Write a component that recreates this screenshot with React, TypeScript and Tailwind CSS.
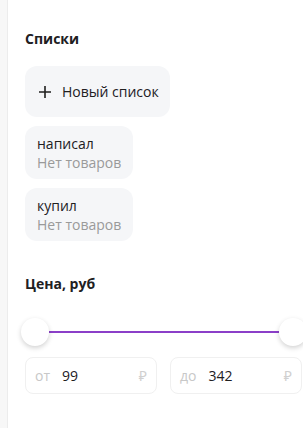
import React from "react";

const lists = [
  { name: "написал", count: "Нет товаров" },
  { name: "купил", count: "Нет товаров" },
];

const App: React.FC = () => {
  return (
    <div
      className="flex h-[428px] w-[303px] overflow-hidden bg-white text-[#21201f]"
      style={{ fontFamily: '"Open Sans", "Noto Sans", sans-serif' }}
    >
      <div className="w-2 shrink-0 border-r border-[#ececec] bg-[#f7f7f7]" />

      <div className="flex flex-1 flex-col pl-[17px] pt-[29px]">
        <h2 className="text-[14px] font-bold leading-5">Списки</h2>

        <div className="mt-[17px] flex flex-col items-start gap-[9px]">
          <button className="flex h-[51px] items-center gap-[10px] rounded-xl bg-[#f5f6f8] pl-[13px] pr-[11px] text-[14px]">
            <svg width="14" height="14" viewBox="0 0 14 14" fill="none">
              <path d="M7 1v12M1 7h12" stroke="#21201f" strokeWidth="1.6" />
            </svg>
            <span>Новый список</span>
          </button>

          <div className="flex flex-col gap-[9px]">
            {lists.map((l) => (
              <div key={l.name} className="flex h-[53px] flex-col justify-center rounded-xl bg-[#f5f6f8] px-3">
                <span className="text-[14px] leading-[19px]">{l.name}</span>
                <span className="text-[14px] leading-[19px] text-[#9a9a9a]">{l.count}</span>
              </div>
            ))}
          </div>
        </div>

        <h2 className="mt-[33px] text-[14px] font-bold leading-5">Цена, руб</h2>

        <div className="relative mt-[24px] h-[28px] w-[290px]">
          <div className="absolute left-[24px] right-[10px] top-[13px] h-[2px] bg-[#8b3fc8]" />
          <div className="absolute left-[-4px] top-0 h-7 w-7 rounded-full bg-white shadow-[0_2px_5px_rgba(0,0,0,0.18)]" />
          <div className="absolute left-[254px] top-0 h-7 w-7 rounded-full bg-white shadow-[0_2px_5px_rgba(0,0,0,0.18)]" />
        </div>

        <div className="mt-[11px] flex gap-[13px]">
          <div className="flex h-[37px] w-[132px] shrink-0 items-center rounded-lg border border-[#f0f0f0] px-[9px] text-[14px]">
            <span className="text-[#c8c8c8]">от</span>
            <span className="ml-[12px] flex-1">99</span>
            <span className="text-[#d0d0d0]">₽</span>
          </div>
          <div className="flex h-[37px] w-[132px] shrink-0 items-center rounded-lg border border-[#f0f0f0] px-[9px] text-[14px]">
            <span className="text-[#c8c8c8]">до</span>
            <span className="ml-[12px] flex-1">342</span>
            <span className="text-[#d0d0d0]">₽</span>
          </div>
        </div>
      </div>
    </div>
  );
};

export default App;
